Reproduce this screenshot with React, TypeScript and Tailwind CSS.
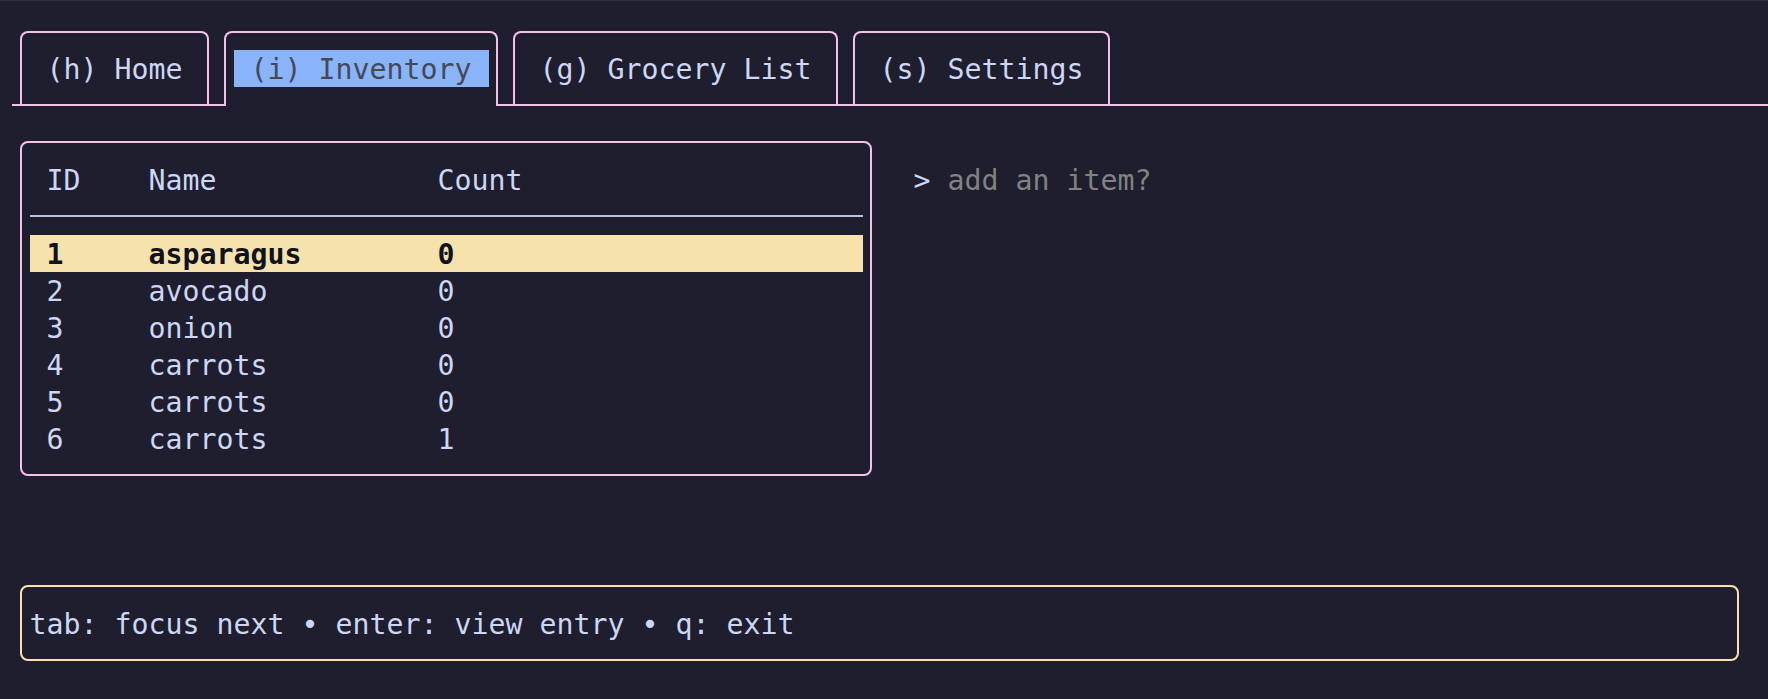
import React from "react";

const rows = [
  { id: 1, name: "asparagus", count: 0 },
  { id: 2, name: "avocado", count: 0 },
  { id: 3, name: "onion", count: 0 },
  { id: 4, name: "carrots", count: 0 },
  { id: 5, name: "carrots", count: 0 },
  { id: 6, name: "carrots", count: 1 },
];

const tabs = [
  { label: "(h) Home", width: "w-[189px]" },
  { label: "(i) Inventory", width: "w-[274px]", active: true },
  { label: "(g) Grocery List", width: "w-[325px]" },
  { label: "(s) Settings", width: "w-[257px]" },
];

export default function App() {
  return (
    <div
      className="w-full h-[699px] bg-[#1e1e2e] border-t border-[#2e2e3e] text-[#cdd6f4] text-[28.24px] leading-[37px] whitespace-pre overflow-hidden"
      style={{ fontFamily: '"DejaVu Sans Mono", "Liberation Mono", monospace' }}
    >
      {/* Tab bar */}
      <div className="mt-[30px] ml-[12px] pl-[8px] flex items-end gap-[15px] border-b-2 border-[#f5c2e7]">
        {tabs.map((t) =>
          t.active ? (
            <div
              key={t.label}
              className={`${t.width} h-[75px] -mb-[2px] relative bg-[#1e1e2e] border-2 border-b-0 border-[#f5c2e7] rounded-t-[8px] pl-[7.5px] pt-[17px]`}
            >
              <div className="w-[255px] h-[37px] bg-[#89b4fa] text-[#45475a] pt-[1px]">{" " + t.label}</div>
            </div>
          ) : (
            <div
              key={t.label}
              className={`${t.width} h-[73px] border-2 border-b-0 border-[#f5c2e7] rounded-t-[8px] pl-[24.5px] pt-[18px]`}
            >
              {t.label}
            </div>
          )
        )}
      </div>

      {/* Main area */}
      <div className="mt-[35px] pl-[20px] flex items-start gap-[41.5px]">
        <div className="w-[852px] h-[335px] border-2 border-[#f5c2e7] rounded-[8px] pt-[17.5px] px-[7.5px]">
          <div className="flex h-[37px] pt-[1px]">
            <span className="w-[119px] pl-[17px]">ID</span>
            <span className="w-[289px]">Name</span>
            <span>Count</span>
          </div>
          <div className="h-[37px] flex items-center">
            <div className="w-full h-[2px] bg-[#bac2de]" />
          </div>
          {rows.map((r, i) => (
            <div
              key={r.id}
              className={`flex h-[37px] pt-[1px] ${i === 0 ? "bg-[#f6e2ad] text-[#11111b] font-bold" : ""}`}
            >
              <span className="w-[119px] pl-[17px]">{r.id}</span>
              <span className="w-[289px]">{r.name}</span>
              <span>{r.count}</span>
            </div>
          ))}
        </div>
        <div className="mt-[20.5px]">
          <span>{"> "}</span>
          <span className="text-[#828282]">add an item?</span>
        </div>
      </div>

      {/* Help footer */}
      <div className="mt-[109px] ml-[20px] w-[1719px] h-[76px] border-2 border-[#f9e2af] rounded-[8px] pt-[18.5px] pl-[7.5px]">
        tab: focus next • enter: view entry • q: exit
      </div>
    </div>
  );
}
